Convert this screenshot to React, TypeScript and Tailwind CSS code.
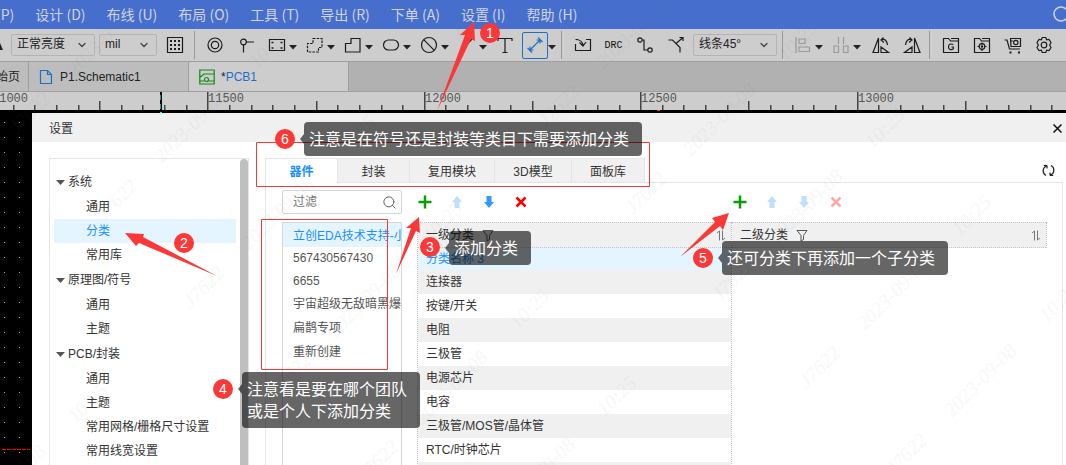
import { useState } from "react";
import type { ReactNode } from "react";
import { ChevronDown, Search } from "lucide-react";

const menus = ["设计 (D)", "布线 (U)", "布局 (O)", "工具 (T)", "导出 (R)", "下单 (A)", "设置 (I)", "帮助 (H)"];

const tree = [
  { name: "系统", children: ["通用", "分类", "常用库"] },
  { name: "原理图/符号", children: ["通用", "主题"] },
  { name: "PCB/封装", children: ["通用", "主题", "常用网格/栅格尺寸设置", "常用线宽设置"] },
];

const libTabs = [
  { name: "器件", width: "w-[72px]" },
  { name: "封装", width: "w-[72px]" },
  { name: "复用模块", width: "w-[85px]" },
  { name: "3D模型", width: "w-[77px]" },
  { name: "面板库", width: "w-[73px]" },
];

const teams = [
  { name: "立创EDA技术支持-小组", height: "h-6" },
  { name: "567430567430", height: "h-[22px]" },
  { name: "6655", height: "h-[23px]" },
  { name: "宇宙超级无敌暗黑爆龙", height: "h-6" },
  { name: "扁鹊专项", height: "h-6" },
  { name: "重新创建", height: "h-6" },
];

const categories = [
  "分类名称 3",
  "连接器",
  "按键/开关",
  "电阻",
  "三极管",
  "电源芯片",
  "电容",
  "三极管/MOS管/晶体管",
  "RTC/时钟芯片",
];

function Icon({ children, muted }: { children: ReactNode; muted?: boolean }) {
  return (
    <svg
      width="20"
      height="20"
      viewBox="0 0 20 20"
      fill="none"
      stroke={muted ? "#9a9a9a" : "#1c1c1c"}
      strokeWidth="1.2"
      className="shrink-0"
      aria-hidden="true"
    >
      {children}
    </svg>
  );
}

function Caret() {
  return (
    <svg width="8" height="5" viewBox="0 0 8 5" className="mt-1 shrink-0" aria-hidden="true">
      <path d="M0 0h8L4 4.5z" fill="#222" />
    </svg>
  );
}

function Tool({ label, className, children }: { label: string; className?: string; children: ReactNode }) {
  return (
    <button aria-label={label} className={`flex h-8 shrink-0 items-center justify-center ${className || "w-[31px]"}`}>
      {children}
    </button>
  );
}

function DropTool({ label, muted, children }: { label: string; muted?: boolean; children: ReactNode }) {
  return (
    <button aria-label={label} className="flex h-8 w-[38px] shrink-0 items-center gap-0.5 pl-1">
      <Icon muted={muted}>{children}</Icon>
      <Caret />
    </button>
  );
}

function Divider() {
  return <span className="h-7 w-px shrink-0 bg-[#999]" />;
}

function Select({ label, value, className }: { label: string; value: string; className: string }) {
  return (
    <span className={`relative h-[22px] shrink-0 rounded-xs border border-[#b2b2ba] ${className}`}>
      <select
        aria-label={label}
        className="block h-5 w-full appearance-none bg-transparent pb-0.5 pl-[5px] text-xs text-[#222] outline-none"
      >
        <option>{value}</option>
      </select>
      <ChevronDown size={12} strokeWidth={2.5} className="pointer-events-none absolute top-1 right-[6px] text-[#444]" />
    </span>
  );
}

function Toolbar() {
  return (
    <div className="flex h-8 shrink-0 items-center bg-[#cdcdcd]">
      <svg width="11" height="20" viewBox="0 0 11 20" className="shrink-0" aria-hidden="true">
        <path d="M-4 15L0 8l3 7z" fill="#222" />
      </svg>
      <Select label="亮度" value="正常亮度" className="w-[84px]" />
      <Select label="单位" value="mil" className="ml-1 w-[58px]" />
      <Tool label="网格" className="ml-0.5 w-8">
        <Icon>
          <path d="M2.500 2.500h15v15h-15z" />
          <path d="M5 6h10M5 10h10M5 14h10" strokeWidth="2" strokeDasharray="2 2" />
        </Icon>
      </Tool>
      <span className="w-[3px]" />
      <Divider />
      <span className="w-1" />
      <Tool label="焊盘" className="w-8">
        <Icon>
          <circle cx="10" cy="10" r="7" />
          <circle cx="10" cy="10" r="3.7" />
        </Icon>
      </Tool>
      <Tool label="过孔" className="w-8">
        <Icon>
          <circle cx="6.500" cy="7" r="2.800" />
          <path d="M9.300 7H17M6.500 9.800V17.500" />
        </Icon>
      </Tool>
      <DropTool label="板框">
        <path d="M2.500 4.500h15v11h-15z" />
        <path d="M4.500 7.500h2M13.500 7.500h2M4.500 13h2M13.500 13h2" strokeWidth="1.600" />
      </DropTool>
      <DropTool label="区域">
        <path d="M8 3.500h9v9h-3.500v4.500h-11V8.500H8z" strokeDasharray="2.500 1.200" />
      </DropTool>
      <DropTool label="铺铜">
        <path d="M8 3.500h9v13.500H2.500V8.500H8z" />
      </DropTool>
      <DropTool label="填充">
        <rect x="2.500" y="5" width="15" height="10" rx="5" />
      </DropTool>
      <DropTool label="禁止区域">
        <circle cx="10" cy="10" r="7.500" />
        <path d="M4.700 4.700l10.600 10.600" />
      </DropTool>
      <DropTool label="线条">
        <path d="M3 17L15 4" />
      </DropTool>
      <Tool label="文本" className="w-7">
        <Icon>
          <path d="M3 6V3.500h14V6M10 3.500v14M7.500 17.500h5" />
        </Icon>
      </Tool>
      <button
        aria-label="尺寸"
        className="ml-[3px] flex h-[27px] w-[26px] shrink-0 items-center justify-center rounded-xs border border-[#1f70c5]"
      >
        <svg width="18" height="18" viewBox="0 0 18 18" fill="none" stroke="#1f70c5" strokeWidth="1.200" aria-hidden="true">
          <path d="M4 14L14 4M4 10.500V14h3.500M14 7.500V4h-3.500M1.500 12l4.500 4.500M12 1.500L16.500 6" />
        </svg>
      </button>
      <Caret />
      <span className="w-[5px]" />
      <Divider />
      <span className="w-[5px]" />
      <Tool label="导入变更">
        <Icon>
          <path d="M5 4.500H2.500M2.500 9v6.500h15v-11H13M2.500 4.500c5 0 7 2 7.500 6M6.500 7.500l3.500 3.500 3-4" />
        </Icon>
      </Tool>
      <Tool label="DRC">
        <span className="font-['Liberation_Mono',monospace] text-[10px] text-[#111]">DRC</span>
      </Tool>
      <Tool label="布线">
        <Icon>
          <circle cx="5" cy="5" r="2.200" />
          <circle cx="15" cy="15" r="2.200" />
          <path d="M7.200 5H9v10h3.800" />
        </Icon>
      </Tool>
      <Tool label="拉伸布线">
        <Icon>
          <path d="M2.500 5h4l7.500 7.500v5M10 8.500L17 2.500M13.500 2.500H17V6" />
        </Icon>
      </Tool>
      <Select label="拐角" value="线条45°" className="ml-0.5 w-[84px]" />
      <span className="w-[5px]" />
      <Divider />
      <span className="w-1.5" />
      <DropTool label="对齐" muted>
        <path d="M3 2v16M6 4h6v4.500H6zM6 12h10.500v4.500H6z" />
      </DropTool>
      <DropTool label="分布" muted>
        <path d="M7.500 2v7M12.500 2v7M3 11h4.500v6.500H3zM12.500 11H17v6.500h-4.500z" />
      </DropTool>
      <Tool label="左旋">
        <Icon>
          <path d="M2 17.500h5.500V3zM10 17.500h7.500L10 12zM10 5c4-2 6 1 6.500 5M12.500 2.500L10 5l3 2.500" />
        </Icon>
      </Tool>
      <Tool label="右旋">
        <Icon>
          <path d="M18 17.500h-5.500V3zM10 17.500H2.500L10 12zM10 5c-4-2-6 1-6.500 5M7.500 2.500L10 5 7 7.500" />
        </Icon>
      </Tool>
      <span className="w-0.5" />
      <Divider />
      <span className="w-[5px]" />
      <Tool label="Gerber">
        <Icon>
          <path d="M2.500 17.500v-14h5l2 2.500h8v11.500zM10 3.500h7.500V6M12.300 9.500c-3-1.300-4.800 0-4.800 2.500s3 3.500 4.800 1.800V12H10.500" />
        </Icon>
      </Tool>
      <Tool label="坐标文件">
        <Icon>
          <path d="M2.500 17.500v-14h5l2 2.500h8v11.500zM10 3.500h7.500V6M10 7.500v2M10 13.500v2.500M5.500 11.500H7M13 11.500h1.500" />
          <circle cx="10" cy="11.500" r="2.800" />
          <circle cx="10" cy="11.500" r=".6" />
        </Icon>
      </Tool>
      <Tool label="下单">
        <Icon>
          <path d="M1.500 5H4l2.500 9H17M7.500 3.500h10V11.500H8zM8 6h2" />
          <circle cx="12.800" cy="7.500" r="2.200" />
          <path d="M6.500 17.500h2M15 17.500h2" strokeWidth="2" />
        </Icon>
      </Tool>
      <Tool label="设置">
        <Icon>
          <path d="M8.200 2.500h3.600l.8 2.300 2.400-.3 2 3-1.400 2.500 1.400 2.500-2 3-2.400-.3-.8 2.300H8.200l-.8-2.300-2.400.3-2-3L4.400 10 3 7.500l2-3 2.400.3z" />
          <circle cx="10" cy="10" r="2.800" />
        </Icon>
      </Tool>
    </div>
  );
}

function DocTabs() {
  return (
    <div className="flex h-[31px] shrink-0 border-y border-[#9f9f9f] bg-[#b1b1b1] text-xs text-[#222]">
      <button className="flex w-[29px] items-center justify-end overflow-hidden border-r border-[#9f9f9f] bg-[#bdbdbd] pr-2 whitespace-nowrap">
        始页
      </button>
      <button className="flex w-40 items-center gap-[7px] border-r border-[#9f9f9f] bg-[#bdbdbd] pl-2.5">
        <svg width="14" height="16" viewBox="0 0 14 16" fill="none" stroke="#1f70c5" strokeWidth="1.200" aria-hidden="true">
          <path d="M1.500 1.500h7l4 4v9h-11zM8.500 1.500v4h4" />
        </svg>
        P1.Schematic1
      </button>
      <button className="flex w-40 items-center gap-1.5 border-r border-[#9f9f9f] bg-[#cdcdcd] pl-2.5">
        <svg width="16" height="16" viewBox="0 0 16 16" fill="none" stroke="#128a12" strokeWidth="1.200" aria-hidden="true">
          <path d="M.8 1h14.400v14H.8zM.8 8.500L5 5h10M.8 12h4.700M9.500 12H15" />
          <circle cx="7.500" cy="10.500" r="2" />
        </svg>
        <span>
          *<span className="text-[#1f70c5]">PCB1</span>
        </span>
      </button>
    </div>
  );
}

function Ruler() {
  // major tick every 216.4px, ten minor ticks each
  const ticks = Array.from({ length: 50 }, (_, i) => i);
  return (
    <svg className="h-[18px] w-full shrink-0 bg-[#cdcdcd]" aria-hidden="true">
      {ticks.map((i) => {
        const x = Math.round(-9 + i * 21.64);
        const top = i % 10 === 0 ? 0 : i % 5 === 0 ? 9 : 13;
        return <rect key={i} x={x} y={top} width="1.500" height={18 - top} fill="#444" />;
      })}
      {ticks
        .filter((i) => i % 10 === 0)
        .map((i) => (
          <text
            key={i}
            x={Math.round(-8 + i * 21.64)}
            y="10"
            fill="#555"
            fontSize="12"
            fontFamily="'Liberation Mono', monospace"
          >
            {11000 + i * 50}
          </text>
        ))}
      <path d="M161 0v18" stroke="#000" strokeWidth="2" />
      <path d="M160.500 3v15" stroke="#0aa" strokeDasharray="5 4" />
    </svg>
  );
}

function Canvas() {
  return (
    <svg className="absolute inset-0 h-full w-full" aria-hidden="true">
      <defs>
        <pattern id="dots" x="4" y="12" width="15" height="15" patternUnits="userSpaceOnUse">
          <rect width="1" height="1" fill="#aaa" />
        </pattern>
      </defs>
      <rect width="100%" height="100%" fill="#000" />
      <rect y="4" width="32" height="100%" fill="url(#dots)" />
      <rect x="2" y="339" width="28" height="1" fill="#000" />
      <path d="M2 339.500h28" stroke="#f00" strokeDasharray="4 1" />
      <path d="M160 2.500h2" stroke="#0ff" />
      <path d="M657 .5h3" stroke="#f22" />
    </svg>
  );
}

function Tree() {
  const [active, setActive] = useState("系统/分类");
  return (
    <nav className="flex w-[200px] shrink-0 border border-b-0 border-[#e5e5e5] text-xs">
      <ul className="min-w-0 flex-1 px-1 pt-2.5">
        {tree.map((group) => (
          <li key={group.name}>
            <button className="flex h-[26px] w-full items-center gap-[3px] pl-0.5">
              <svg width="9" height="5" viewBox="0 0 9 5" aria-hidden="true">
                <path d="M0 0h9L4.500 5z" fill="#555" />
              </svg>
              {group.name}
            </button>
            <ul>
              {group.children.map((child) => {
                const key = `${group.name}/${child}`;
                return (
                  <li key={key}>
                    <button
                      onClick={() => setActive(key)}
                      className={`h-6 w-full pl-8 text-left whitespace-nowrap ${active === key ? "bg-[#e5f5ff] text-[#1890ff]" : ""}`}
                    >
                      {child}
                    </button>
                  </li>
                );
              })}
            </ul>
          </li>
        ))}
      </ul>
      <div className="w-2 rounded-t-full bg-[#bfbfbf]" />
    </nav>
  );
}

function Arrow({ up, muted }: { up?: boolean; muted?: boolean }) {
  return (
    <svg width="12" height="14" viewBox="0 0 12 14" fill={muted ? "#bfdfff" : "#3399ff"} aria-hidden="true">
      <path d={up ? "M6 1l5 6H8.500v6h-5V7H1z" : "M6 13L1 7h2.500V1h5v6H11z"} />
    </svg>
  );
}

function EditBar({ disabled }: { disabled?: boolean }) {
  return (
    <div className="mb-2 flex h-6 shrink-0">
      <button aria-label="添加" className="flex w-4 items-center justify-center">
        <svg width="14" height="14" viewBox="0 0 14 14" aria-hidden="true">
          <path d="M7 .5v13M.5 7h13" stroke="#0a9d0a" strokeWidth="2.500" />
        </svg>
      </button>
      <button aria-label="上移" className="ml-4 flex w-4 items-center justify-center">
        <Arrow up muted />
      </button>
      <button aria-label="下移" className="ml-4 flex w-4 items-center justify-center">
        <Arrow muted={disabled} />
      </button>
      <button aria-label="删除" className="ml-4 flex w-4 items-center justify-center">
        <svg width="12" height="12" viewBox="0 0 12 12" aria-hidden="true">
          <path d="M1.500 1.500l9 9M10.500 1.500l-9 9" stroke={disabled ? "#ffa8a8" : "#f00"} strokeWidth="2.500" />
        </svg>
      </button>
    </div>
  );
}

function CategoryTable({ title, rows }: { title: string; rows: string[] }) {
  return (
    <table className="w-full border-separate border-spacing-0 text-left text-xs">
      <thead>
        <tr className="bg-[#f0f0f0]">
          <th className="h-[26px] border-y border-dotted border-[#c4c4c4] p-0 pl-2 font-normal">
            <span className="flex items-center">
              {title}
              <svg width="12" height="13" viewBox="0 0 12 13" fill="none" stroke="#555" className="ml-2" aria-hidden="true">
                <path d="M1 1.500h10L7.500 6.500v4L5 12V6.500z" />
              </svg>
              <svg width="10" height="11" viewBox="0 0 10 11" fill="none" stroke="#777" className="mr-[5px] ml-auto" aria-hidden="true">
                <path d="M1 3l2.500-2v9.500M6.500 .5V10l2.500-2" />
              </svg>
            </span>
          </th>
        </tr>
      </thead>
      <tbody>
        {rows.map((row, i) => (
          <tr key={row} className={i === 0 ? "bg-[#e5f5ff] text-[#1890ff]" : i % 2 ? "bg-[#f0f0f0]" : "bg-white"}>
            <td className={`p-0 pl-2 ${i === 0 ? "h-[22px]" : "h-6"}`}>{row}</td>
          </tr>
        ))}
      </tbody>
    </table>
  );
}

function Library() {
  const [tab, setTab] = useState("器件");
  return (
    <section className="flex min-w-0 flex-1 flex-col text-xs">
      <div className="flex h-[25px] shrink-0">
        {libTabs.map((t) => (
          <button
            key={t.name}
            onClick={() => setTab(t.name)}
            className={`shrink-0 border-t border-l border-[#e5e5e5] pt-0.5 ${t.width} ${
              tab === t.name ? "bg-white font-bold text-[#1890ff]" : "border-b bg-[#f0f0f0]"
            }`}
          >
            {t.name}
          </button>
        ))}
        <div className="flex flex-1 items-center justify-end border-b border-l border-[#e5e5e5] pr-2">
          <button aria-label="刷新">
            <svg width="13" height="13" viewBox="0 0 13 13" fill="none" stroke="#222" strokeWidth="1.200" aria-hidden="true">
              <path d="M5 1.500H1.800M5 1.500V4.500M4.500 2A5.200 5.200 0 0 0 4 11.500M8 11.500h3.200M8 11.500v-3M8.500 11A5.200 5.200 0 0 0 9 1.500" />
            </svg>
          </button>
        </div>
      </div>
      <div className="flex flex-1 border-x border-[#e5e5e5] pt-[7px] pr-[15px] pl-4">
        <div className="flex w-[120px] shrink-0 flex-col">
          <label className="flex h-6 shrink-0 items-center rounded-xs border border-[#d5d5d5] pr-1 pl-2.5">
            <input aria-label="过滤" placeholder="过滤" className="w-0 flex-1 outline-none placeholder:text-[#777]" />
            <Search size={15} strokeWidth={1.5} className="text-[#555]" />
          </label>
          <ul className="mt-2 flex-1 overflow-hidden border border-b-0 border-[#d5d5d5] text-[#555]">
            {teams.map((team, i) => (
              <li key={team.name}>
                <button
                  className={`block w-full overflow-hidden pl-2.5 text-left whitespace-nowrap ${team.height} ${
                    i === 0 ? "bg-[#e5f5ff] pt-0.5 text-[#1890ff]" : ""
                  }`}
                >
                  {team.name}
                </button>
              </li>
            ))}
          </ul>
        </div>
        <div className="ml-[15px] grid flex-1 grid-cols-2">
          <div className="flex flex-col">
            <EditBar />
            <div className="flex-1 border-x border-dotted border-[#c4c4c4]">
              <CategoryTable title="一级分类" rows={categories} />
              <div className="h-6 bg-[#f0f0f0]" />
            </div>
          </div>
          <div className="flex flex-col">
            <EditBar disabled />
            <div className="border-r border-dotted border-[#c4c4c4]">
              <CategoryTable title="二级分类" rows={[]} />
            </div>
          </div>
        </div>
      </div>
    </section>
  );
}

function SettingsDialog() {
  return (
    <div role="dialog" aria-label="设置" className="absolute inset-0 top-[3px] left-8 flex flex-col bg-white text-[#333]">
      <header className="flex h-[29px] shrink-0 items-center justify-between bg-[#f0f0f0] pt-0.5 pr-1 pl-[17px] text-xs">
        设置
        <button aria-label="关闭">
          <svg width="9" height="9" viewBox="0 0 9 9" stroke="#111" strokeWidth="1.500" aria-hidden="true">
            <path d="M.5 .5l8 8M8.500 .5l-8 8" />
          </svg>
        </button>
      </header>
      <div className="flex min-h-0 flex-1 gap-4 overflow-hidden pt-4 pr-[3px] pl-[17px]">
        <Tree />
        <Library />
      </div>
    </div>
  );
}

function Badge({ n, className }: { n: number; className: string }) {
  return (
    <span className={`absolute flex size-5 items-center justify-center rounded-full bg-[#fb3838] text-sm text-white ${className}`}>
      {n}
    </span>
  );
}

function Note({ className, children }: { className: string; children: ReactNode }) {
  return (
    <div className={`absolute rounded-sm bg-black/60 px-[5px] pt-[7px] pb-[5px] text-base leading-[22px] whitespace-nowrap text-white ${className}`}>
      <span className="absolute top-3 -left-1 border-y-[5px] border-r-4 border-y-transparent border-r-black/60" />
      {children}
    </div>
  );
}

function Annotations() {
  return (
    <div className="pointer-events-none absolute inset-0">
      <svg className="absolute inset-0 h-full w-full" fill="#fb3838" aria-hidden="true">
        <path d="M474 22l1 19-4-2-34 72 28-76-5 0z" />
        <path d="M125 233l19 1-1 3 74 39-78-33-3 3z" />
        <path d="M419 217l1 16-4-2-20 43 15-46-5 0z" />
        <path d="M729 213l-6 17-3-4-40 31 35-35-3-4z" />
        <path d="M256.500 142.500h393v44h-393zM261.500 219.500h126v150h-126z" fill="none" stroke="#f03a3a" />
      </svg>
      <Badge n={1} className="top-[23px] left-[480px]" />
      <Badge n={2} className="top-[233px] left-[174px]" />
      <Badge n={3} className="top-[237px] left-[420px]" />
      <Badge n={4} className="top-[379px] left-[213px]" />
      <Badge n={5} className="top-[248px] left-[693px]" />
      <Badge n={6} className="top-[129px] left-[275px]" />
      <Note className="top-[122px] left-[304px] w-[338px]">注意是在符号还是封装等类目下需要添加分类</Note>
      <Note className="top-[231px] left-[449px] w-[82px]">添加分类</Note>
      <Note className="top-[241px] left-[722px] w-[226px]">还可分类下再添加一个子分类</Note>
      <Note className="top-[372px] left-[242px] w-[178px]">
        注意看是要在哪个团队
        <br />
        或是个人下添加分类
      </Note>
    </div>
  );
}

const stamps = [-2, -1, 0, 1, 2, 3, 4, 5, 6]
  .flatMap((r) => [-3, -2, -1, 0, 1, 2].map((c) => ({ x: 104 + r * 87 + c * 268, y: 222 + r * 87 - c * 268 })))
  .filter((s) => s.x > -160 && s.x < 1066 && s.y > 0 && s.y < 620);

function Watermark() {
  return (
    <svg
      className="pointer-events-none absolute inset-0 h-full w-full opacity-5"
      fill="#777"
      fontSize="20"
      fontStyle="italic"
      fontFamily="'Liberation Serif', serif"
      aria-hidden="true"
    >
      {stamps.map((s) => (
        <g key={`${s.x}:${s.y}`} transform={`translate(${s.x} ${s.y}) rotate(-45)`}>
          <text>J7622</text>
          <text x="82">2023-09-08</text>
          <text x="216">10:25</text>
        </g>
      ))}
    </svg>
  );
}

export default function App() {
  return (
    <div className="relative flex h-screen flex-col overflow-hidden font-['Liberation_Sans','Noto_Sans_CJK_SC',sans-serif]">
      <header className="flex h-[29px] shrink-0 items-center gap-[21px] overflow-hidden bg-[#466ecd] pb-0.5 font-['Noto_Sans_CJK_SC',sans-serif] text-sm whitespace-nowrap text-[#d0d4df]">
        <button className="-ml-1">(P)</button>
        {menus.map((m) => (
          <button key={m}>{m}</button>
        ))}
        <button aria-label="搜索" className="-mr-1 ml-auto">
          <svg width="18" height="18" viewBox="0 0 18 18" fill="none" stroke="currentColor" strokeWidth="1.500" aria-hidden="true">
            <circle cx="9" cy="9" r="7" />
            <path d="M14 14l3 3" />
          </svg>
        </button>
      </header>
      <Toolbar />
      <DocTabs />
      <Ruler />
      <main className="relative flex-1">
        <Canvas />
        <SettingsDialog />
      </main>
      <Watermark />
      <Annotations />
    </div>
  );
}
